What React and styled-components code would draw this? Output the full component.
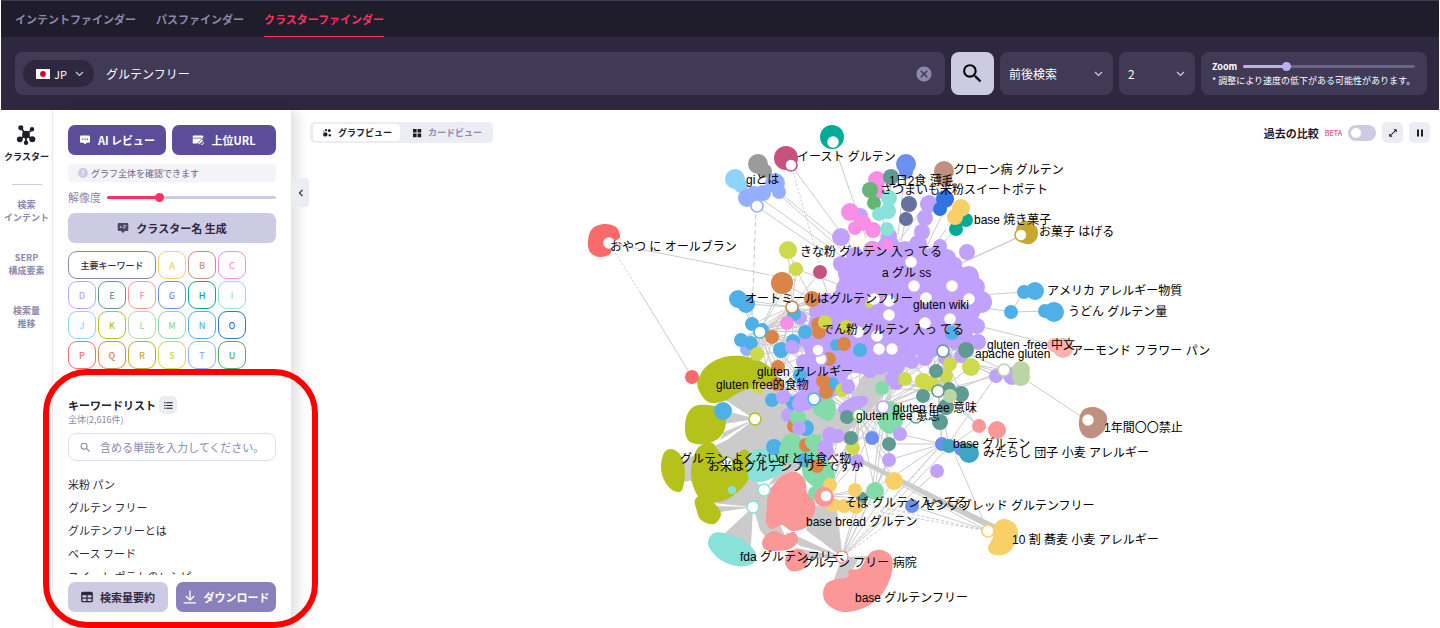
import React from 'react';
import styled, { createGlobalStyle } from 'styled-components';
import {
    MdCancel,
    MdChevronLeft,
    MdFormatListBulleted,
    MdOpenInFull,
    MdPause,
    MdSearch
} from 'react-icons/md';

const colors = {
    ink: '#1f1c2b',
    night: '#2d2840',
    field: '#403a57',
    muted: '#8e88ac',
    lilac: '#cdcae3',
    violet: '#5b4d9a',
    pink: '#fc3160',
    haze: '#ececf3',
    edge: '#cbcbcb'
};

const uiFont = '"Noto Sans CJK JP", "Noto Sans", sans-serif';

const GlobalStyle = createGlobalStyle`
    * {
        box-sizing: border-box;
    }

    body {
        margin: 0;
        background: white;
        color: ${colors.night};
        font-family: ${uiFont};
        font-size: 11px;
    }

    button, input, select {
        margin: 0;
        font-family: inherit;
        color: inherit;
    }

    button {
        padding: 0;
        border: 0;
        cursor: pointer;
    }

    a {
        color: inherit;
        text-decoration: none;
    }
`;

const Page = styled.div`
    display: flex;
    flex-direction: column;
    height: 100vh;
    padding: 0 1px;
    overflow: hidden;
`;

const TopNav = styled.nav`
    display: flex;
    flex: none;
    gap: 20px;
    height: 37px;
    padding: 0 14px;
    border-top: 1px solid ${colors.field};
    background: ${colors.ink};
`;

const NavLink = styled.a`
    display: flex;
    align-items: center;
    border-bottom: 1px solid ${props => (props.$active ? colors.pink : 'transparent')};
    color: ${props => (props.$active ? colors.pink : colors.muted)};
    font-weight: 700;
    line-height: 16px;
`;

const Toolbar = styled.div`
    display: flex;
    flex: none;
    gap: 6px;
    padding: 15px 12px 15px 14px;
    background: ${colors.night};
    color: white;
    font-size: 12px;
`;

const SearchBox = styled.div`
    display: flex;
    flex: 1;
    align-items: center;
    height: 43px;
    padding: 0 12px 0 8px;
    border-radius: 8px;
    background: ${colors.field};
`;

const CountryPill = styled.label`
    display: grid;
    grid-template-columns: 14px 1fr 9px;
    align-items: center;
    gap: 4px;
    width: 71px;
    height: 27px;
    padding: 0 10px 0 13px;
    border-radius: 14px;
    background: ${colors.night};
`;

const PlainSelect = styled.select`
    width: 100%;
    padding: 0;
    border: 0;
    appearance: none;
    background: transparent;
    font-size: ${props => props.$size || 12}px;
`;

const QueryInput = styled.input`
    flex: 1;
    min-width: 0;
    padding: 0 12px;
    border: 0;
    outline: 0;
    background: transparent;
    font-size: 12px;
`;

const ClearButton = styled.button`
    display: flex;
    background: transparent;
    color: ${colors.muted};
`;

const SubmitButton = styled.button`
    display: flex;
    align-items: center;
    justify-content: center;
    width: 43px;
    border-radius: 8px;
    background: ${colors.lilac};
    color: black;
`;

const SelectField = styled.label`
    display: grid;
    grid-template-columns: 1fr 9px;
    align-items: center;
    width: ${props => props.$width}px;
    padding: 0 10px 0 9px;
    border-radius: 8px;
    background: ${colors.field};
`;

const ZoomField = styled.div`
    display: flex;
    flex-direction: column;
    justify-content: center;
    width: 226px;
    padding: 0 12px 0 11px;
    border-radius: 8px;
    background: ${colors.field};
    font-size: 9px;
    line-height: 14px;
`;

const ZoomRow = styled.div`
    display: flex;
    align-items: center;
    gap: 6px;
    font-weight: 700;
`;

const ZoomNote = styled.span`
    white-space: nowrap;
`;

const Slider = styled.input`
    flex: 1;
    min-width: 0;
    height: 10px;
    appearance: none;
    background: transparent;

    &::-webkit-slider-runnable-track {
        height: 3px;
        border-radius: 2px;
        background: linear-gradient(
            to right,
            ${props => props.$fill} ${props => props.$level}%,
            ${props => props.$rest} ${props => props.$level}%
        );
    }

    &::-webkit-slider-thumb {
        width: 9px;
        height: 9px;
        margin-top: -3px;
        border-radius: 50%;
        appearance: none;
        background: ${props => props.$fill};
    }
`;

const Main = styled.main`
    display: flex;
    flex: 1;
    min-height: 0;
`;

const Rail = styled.nav`
    display: flex;
    flex: none;
    flex-direction: column;
    align-items: center;
    gap: 27px;
    width: 52px;
    padding-top: 15px;
    border-right: 1px solid ${colors.haze};
    color: ${colors.muted};
    font-size: 9px;
    font-weight: 700;
    line-height: 13px;
    text-align: center;
`;

const RailLink = styled.a`
    white-space: pre-line;
`;

const RailHome = styled.a`
    display: flex;
    flex-direction: column;
    align-items: center;
    gap: 5px;
    color: ${colors.ink};
`;

const RailDivider = styled.hr`
    width: 30px;
    margin: -6px 0 -14px;
    border: 0;
    border-top: 1px solid ${colors.lilac};
`;

const Panel = styled.aside`
    z-index: 1;
    display: flex;
    flex: none;
    flex-direction: column;
    width: 238px;
    padding: 15px 15px 16px;
    background: white;
    box-shadow: 6px 0 12px rgba(31, 28, 43, 0.14);
`;

const ButtonRow = styled.div`
    display: grid;
    grid-template-columns: ${props => props.$columns};
    gap: ${props => props.$gap}px;
`;

const buttonTones = {
    violet: { background: colors.violet, color: 'white' },
    lilac: { background: colors.lilac, color: colors.night },
    plum: { background: '#8a80bb', color: 'white' }
};

const ActionButton = styled.button`
    display: flex;
    flex: none;
    align-items: center;
    justify-content: center;
    gap: 7px;
    height: 30px;
    border-radius: 7px;
    background: ${props => buttonTones[props.$tone].background};
    color: ${props => buttonTones[props.$tone].color};
    font-size: 11px;
    font-weight: 700;
    white-space: nowrap;
`;

const Notice = styled.p`
    display: flex;
    align-items: center;
    gap: 3px;
    height: 18px;
    margin: 9px 0 7px;
    padding: 0 10px;
    border-radius: 4px;
    background: #f3f3f8;
    color: #6a6585;
    font-size: 9px;
`;

const ResolutionRow = styled.label`
    display: flex;
    align-items: center;
    gap: 6px;
    height: 16px;
    margin-bottom: 8px;
    color: ${colors.muted};
    line-height: 16px;
`;

const TagGrid = styled.div`
    display: grid;
    grid-template-columns: repeat(6, 28px);
    grid-auto-rows: 28px;
    gap: 2px;
    margin-top: 8px;
`;

const Tag = styled.button`
    grid-column: span ${props => props.$span || 1};
    border: 1px solid ${props => props.$color};
    border-radius: 9px;
    background: white;
    color: ${props => props.$text || props.$color};
    font-size: 9px;
    font-weight: 500;
`;

const KeywordSection = styled.section`
    position: relative;
    display: flex;
    flex: 1;
    flex-direction: column;
    min-height: 0;
    padding-top: 27px;
`;

const Callout = styled.div`
    position: absolute;
    top: 0;
    right: -42px;
    bottom: -16px;
    left: -25px;
    border: 6px solid #fe0000;
    border-radius: 44px;
    pointer-events: none;
`;

const KeywordHeading = styled.div`
    display: flex;
    align-items: center;
    gap: 3px;
    height: 18px;
`;

const KeywordTitle = styled.h2`
    margin: 0;
    color: ${colors.ink};
    font-size: 11px;
    font-weight: 700;
`;

const SquareButton = styled.button`
    display: flex;
    align-items: center;
    justify-content: center;
    width: ${props => props.$size}px;
    height: ${props => props.$size}px;
    border-radius: 5px;
    background: ${colors.haze};
    color: ${colors.ink};
`;

const KeywordTotal = styled.span`
    color: ${colors.muted};
    font-size: 9px;
    line-height: 12px;
`;

const KeywordSearch = styled.label`
    display: flex;
    flex: none;
    align-items: center;
    gap: 8px;
    height: 28px;
    margin: 7px 0 12px;
    padding: 0 0 0 10px;
    border: 1px solid #e0def0;
    border-radius: 8px;
    color: ${colors.muted};
`;

const KeywordInput = styled.input`
    flex: 1;
    min-width: 0;
    padding: 0;
    border: 0;
    outline: 0;
    font-size: 11px;

    &::placeholder {
        color: ${colors.muted};
    }
`;

const KeywordList = styled.ul`
    flex: 1;
    min-height: 0;
    margin: 0 0 7px;
    padding: 0;
    overflow: hidden;
    list-style: none;
    line-height: 23px;
`;

const Workspace = styled.section`
    position: relative;
    display: grid;
    grid-template: 1fr / 1fr;
    flex: 1;
    min-width: 0;
`;

const GraphCanvas = styled.svg`
    grid-area: 1 / 1;
    width: 100%;
    height: 100%;
    min-height: 0;
    font-family: "Liberation Sans", "Noto Sans CJK JP", sans-serif;
    font-size: 12px;
`;

const GraphBar = styled.div`
    z-index: 1;
    display: flex;
    grid-area: 1 / 1;
    align-items: center;
    align-self: start;
    justify-content: space-between;
    padding: 12px 9px 0 19px;
`;

const ViewTabs = styled.div`
    display: flex;
    height: 21px;
    padding: 2px 3px;
    border-radius: 5px;
    background: ${colors.haze};
`;

const ViewTab = styled.button`
    display: flex;
    align-items: center;
    gap: 6px;
    padding: 0 8px 0 ${props => (props.$active ? 9 : 12)}px;
    border-radius: 4px;
    background: ${props => (props.$active ? 'white' : 'transparent')};
    color: ${props => (props.$active ? colors.ink : colors.muted)};
    font-size: 9px;
    font-weight: 700;
`;

const GraphControls = styled.div`
    display: flex;
    align-items: center;
    gap: 6px;
`;

const CompareLabel = styled.label`
    display: flex;
    align-items: center;
    gap: 6px;
    color: ${colors.ink};
    font-weight: 700;
`;

const BetaMark = styled.span`
    color: #ee4a94;
    font-size: 7px;
    font-weight: 500;
`;

const Toggle = styled.input`
    width: 28px;
    height: 16px;
    padding: 3px;
    border-radius: 8px;
    appearance: none;
    background: ${colors.lilac};

    &::before {
        display: block;
        width: 10px;
        height: 10px;
        border-radius: 50%;
        background: white;
        content: '';
    }
`;

const CollapseButton = styled.button`
    position: absolute;
    z-index: 2;
    top: 68px;
    left: 1px;
    display: flex;
    align-items: center;
    justify-content: center;
    width: 17px;
    height: 29px;
    border-radius: 0 4px 4px 0;
    background: ${colors.haze};
`;

const Chevron = () => (
    <svg width="9" height="6" viewBox="0 0 9 6" fill="none" stroke="#cdcae3" aria-hidden="true">
        <path d="M1 1l3.5 3.5L8 1" strokeWidth="1.2" />
    </svg>
);

const Flag = () => (
    <svg width="14" height="10" viewBox="0 0 14 10" aria-hidden="true">
        <rect width="14" height="10" fill="white" />
        <circle cx="7" cy="5" r="2.9" fill="#d80027" />
    </svg>
);

const HubIcon = () => (
    <svg width="20" height="20" viewBox="0 0 20 20" fill="currentColor" aria-hidden="true">
        <path
            d="M10 10L4.8 2.6M10 10l6.2-5.8M10 10l-6.4 4.2M10 10l6.5 4.2M10 10v8"
            stroke="currentColor"
            strokeWidth="1.7"
        />
        <circle cx="10" cy="9.6" r="3.9" />
        <circle cx="4.8" cy="2.8" r="2.5" />
        <circle cx="16" cy="4.3" r="2.2" />
        <circle cx="3.8" cy="14.3" r="2.9" />
        <circle cx="16.3" cy="14.2" r="3" />
        <circle cx="10" cy="17.8" r="2.2" />
    </svg>
);

const ChatIcon = () => (
    <svg width="12" height="12" viewBox="0 0 12 12" aria-hidden="true">
        <path d="M2.2 1.5h7.6A1.2 1.2 0 0 1 11 2.7v4.8a1.2 1.2 0 0 1-1.2 1.2H7.5L6 10.6 4.5 8.7H2.2A1.2 1.2 0 0 1 1 7.5V2.7a1.2 1.2 0 0 1 1.2-1.2z" fill="white" />
        <path d="M3 4.5h1.3v1.3H3zM5.4 4.5h1.3v1.3H5.4zM7.7 4.5H9v1.3H7.7z" fill="#5b4d9a" />
    </svg>
);

const UrlIcon = () => (
    <svg width="12" height="12" viewBox="0 0 12 12" fill="white" aria-hidden="true">
        <path d="M1.6 1.5h8.8c.5 0 .9.4.9.9v1.3H.7V2.4c0-.5.4-.9.9-.9zM.7 4.6h10.6L5.4 9.6H1.6a.9.9 0 0 1-.9-.9z" />
        <path d="M6 10.5l.3-1.8 3.6-3.5 1.5 1.5-3.6 3.5z" stroke="#5b4d9a" strokeWidth=".7" />
        <path d="M9 10.3h1.5c.5 0 .7-.4.7-.9V8.2" fill="none" stroke="white" />
    </svg>
);

const NameIcon = () => (
    <svg width="12" height="12" viewBox="0 0 12 12" aria-hidden="true">
        <path d="M2 1h8a1.3 1.3 0 0 1 1.3 1.3v5.4A1.3 1.3 0 0 1 10 9H7.8L6 11.3 4.2 9H2A1.3 1.3 0 0 1 .7 7.7V2.3A1.3 1.3 0 0 1 2 1z" fill="#4a4561" />
        <path d="M2.4 5.8l1.4-2 1.3 2z" fill="#cdcae3" />
        <path d="M6 3.8h3.5M6 5.8h2.4" fill="none" stroke="#cdcae3" />
    </svg>
);

const InfoIcon = () => (
    <svg width="10" height="10" viewBox="0 0 10 10" aria-hidden="true">
        <circle cx="5" cy="5" r="5" fill="#cdcae3" />
        <path d="M5 2.2v3.5M5 6.8V8" stroke="white" strokeWidth="1" />
    </svg>
);

const TableIcon = () => (
    <svg width="12" height="12" viewBox="0 0 12 12" fill="none" stroke="currentColor" aria-hidden="true">
        <rect x=".8" y="1.3" width="10.4" height="9.4" rx="1" strokeWidth="1.3" />
        <path d="M1 3h10" strokeWidth="2.4" />
        <path d="M1 7.2h10M6 3v7.5" strokeWidth="1.2" />
    </svg>
);

const DownloadIcon = () => (
    <svg width="14" height="14" viewBox="0 0 14 14" fill="none" stroke="currentColor" aria-hidden="true">
        <path d="M7 .8v9M2.8 6L7 10.2 11.2 6M.8 12.8h12.4" strokeWidth="1.3" />
    </svg>
);

const NodesIcon = () => (
    <svg width="10" height="10" viewBox="0 0 10 10" fill="currentColor" aria-hidden="true">
        <circle cx="3.3" cy="6.4" r="2.2" />
        <circle cx="4" cy="2.2" r="1.1" />
        <circle cx="7.3" cy="2.6" r="1.5" />
        <circle cx="7.8" cy="7.3" r="1.2" />
        <circle cx="1.8" cy="3" r=".6" />
    </svg>
);

const CardsIcon = () => (
    <svg width="10" height="10" viewBox="0 0 10 10" fill="#1c1a22" aria-hidden="true">
        <path d="M1 1h3.6v3.6H1zM5.6 1h3.6v3.6H5.6zM1 5.6h3.6v3.6H1zM5.6 5.6h3.6v3.6H5.6z" />
    </svg>
);

const TAGS = [
    ['A', '#f9cf67'], ['B', '#bf8f7f'], ['C', '#f98ee6'], ['D', '#c0a2fd'], ['E', '#5f9a93'],
    ['F', '#fc9797'], ['G', '#6b90f0'], ['H', '#00ab95'], ['I', '#88e2da'], ['J', '#8cd4ff'],
    ['K', '#b5c21c'], ['L', '#bcd5a5'], ['M', '#83dca8'], ['N', '#4fb0e8'], ['O', '#2f74df'],
    ['P', '#f96b6b'], ['Q', '#d98548'], ['R', '#c8a72f'], ['S', '#ced94b'], ['T', '#94afff'],
    ['U', '#4fb063']
];

const KEYWORDS = ['米粉 パン', 'グルテン フリー', 'グルテンフリーとは', 'ベース フード', 'スイート ポテトのレシピ'];

const PURPLE = '#c0a2fd';
const OLIVE = '#b5c21c';
const SALMON = '#fc9797';
const AQUA = '#88e2da';
const GREEN = '#83dca8';
const BLUE = '#4fb0e8';
const LIME = '#ced94b';
const ORANGE = '#d98548';
const PINK = '#f98ee6';
const TEAL = '#5f9a93';
const YELLOW = '#f9cf67';
const ROYAL = '#6b90f0';
const PERI = '#94afff';
const BROWN = '#bf8f7f';
const LEAF = '#bcd5a5';
const JADE = '#00ab95';

// Grey wedges: bundles of edges between a hub and its cluster.
const FANS = [
    '755,419 722,398 745,380 775,376 790,392',
    '755,419 722,410 724,424',
    '755,419 724,432 720,440',
    '755,419 727,440 680,462 684,482 692,480 730,460',
    '755,419 782,392 812,402 815,440 800,470 770,468 740,470 730,448',
    '735,446 745,470 765,490 800,440 850,400 862,376 900,366 880,400 850,430 822,455 780,480 740,500 725,480 725,446',
    '790,395 812,405 830,422 870,384 895,366 862,412 836,440 800,452',
    '753,507 725,533 751,546',
    '753,507 715,506 720,512',
    '753,507 760,530 772,545 785,535 770,505 764,490 745,486 730,500',
    '753,507 700,470 690,480 712,503',
    '842,557 806,530 812,505 836,508',
    '842,557 833,582 848,578 858,560',
    '842,557 842,560 868,560 870,556',
    '842,557 797,548 790,560',
    '842,557 797,536 785,532 800,546',
    '858,462 862,459 1000,527 994,531'
];

const EDGES = [
    [609, 243, 765, 274], [765, 274, 800, 281, '4 3'], [609, 243, 640, 292, '2 2'], [640, 292, 692, 377],
    [833, 142, 866, 238], [791, 165, 850, 245], [791, 165, 822, 272, '2 2'], [756, 206, 752, 320, '5 3'],
    [756, 206, 850, 270], [763, 200, 850, 262], [774, 190, 856, 262], [779, 192, 850, 250],
    [787, 250, 797, 270], [796, 269, 812, 299], [796, 269, 860, 292], [820, 272, 830, 300],
    [782, 283, 812, 299], [1021, 236, 960, 264], [1021, 236, 930, 277], [1024, 292, 980, 295],
    [1024, 292, 1011, 312], [1011, 312, 985, 308], [1011, 312, 1052, 311], [1054, 345, 975, 325],
    [1088, 421, 1020, 376], [1004, 370, 950, 360], [1004, 370, 965, 352], [1004, 370, 955, 390],
    [996, 376, 948, 444], [996, 376, 926, 344], [1012, 376, 940, 355], [988, 531, 955, 455],
    [988, 531, 895, 482], [988, 531, 880, 512, '3 2'], [988, 531, 850, 500, '3 2'], [988, 531, 912, 506],
    [842, 557, 950, 446], [842, 557, 942, 444, '3 2'], [842, 557, 937, 471], [842, 557, 894, 480],
    [842, 557, 889, 460], [842, 557, 875, 491], [842, 557, 855, 507], [842, 557, 836, 503],
    [842, 557, 862, 497], [842, 557, 912, 506, '3 2'], [942, 444, 900, 434], [942, 444, 889, 444],
    [942, 444, 889, 460], [942, 444, 940, 421], [979, 426, 949, 396], [979, 426, 950, 446],
    [997, 430, 979, 426], [946, 229, 926, 260], [906, 163, 898, 235], [944, 178, 900, 240],
    [891, 185, 880, 240], [906, 219, 900, 245], [945, 209, 925, 250], [956, 229, 930, 257],
    [889, 460, 889, 444], [889, 460, 875, 491], [872, 438, 851, 438], [738, 299, 752, 324],
    [752, 324, 760, 331], [791, 323, 752, 330], [741, 340, 765, 328], [884, 418, 875, 491],
    [898, 430, 875, 491], [883, 407, 872, 491], [942, 444, 880, 512], [942, 444, 862, 497],
    [857, 461, 1000, 529], [889, 395, 898, 430]
];

// Each hub is joined by thin edges to every node within its reach.
const HUBS = [
    { x: 755, y: 419, reach: 90 },
    { x: 760, y: 331, reach: 75 },
    { x: 792, y: 307, reach: 62 },
    { x: 818, y: 350, reach: 70 },
    { x: 814, y: 399, reach: 70 },
    { x: 883, y: 407, reach: 64 },
    { x: 859, y: 415, reach: 80 },
    { x: 943, y: 351, reach: 64 },
    { x: 938, y: 391, reach: 60 },
    { x: 826, y: 496, reach: 66 }
];

const BLOBS = [
    [PURPLE, [[838, 284], [844, 264], [854, 252], [868, 252], [880, 240], [890, 230], [902, 244], [916, 240], [930, 250], [944, 246], [952, 260], [964, 268], [976, 280], [984, 300], [978, 318], [968, 332], [950, 340], [936, 344], [930, 360], [920, 354], [908, 362], [898, 380], [888, 372], [866, 374], [850, 374], [840, 392], [824, 402], [806, 410], [800, 394], [806, 362], [804, 346], [808, 326], [814, 310], [830, 300]]],
    [PURPLE, [[838, 408], [850, 398], [864, 396], [868, 402], [858, 410], [844, 416]]],
    [OLIVE, [[698, 388], [699, 377], [708, 365], [724, 357], [742, 356], [760, 361], [774, 371], [775, 382], [755, 387], [740, 392], [724, 401], [708, 402]]],
    [OLIVE, [[685, 430], [687, 415], [695, 406], [708, 405], [722, 409], [726, 422], [721, 436], [706, 444], [690, 442]]],
    [OLIVE, [[661, 468], [664, 453], [672, 449], [681, 456], [685, 472], [682, 490], [674, 491], [665, 482]]],
    [OLIVE, [[691, 476], [694, 456], [700, 446], [712, 443], [718, 450], [730, 462], [742, 450], [750, 454], [750, 474], [742, 488], [726, 500], [712, 502], [698, 496]]],
    [OLIVE, [[695, 500], [702, 495], [714, 503], [721, 514], [714, 524], [701, 520], [696, 508]]],
    [AQUA, [[748, 476], [750, 454], [762, 449], [780, 452], [784, 466], [776, 476], [760, 482]]],
    [AQUA, [[708, 544], [714, 533], [728, 534], [746, 542], [756, 554], [752, 564], [736, 566], [718, 558]]],
    [GREEN, [[778, 452], [784, 437], [796, 434], [808, 444], [820, 434], [822, 450], [832, 466], [834, 480], [818, 488], [804, 478], [800, 464], [782, 462]]],
    [GREEN, [[813, 410], [820, 397], [832, 398], [836, 410], [830, 421], [818, 416]]],
    [GREEN, [[878, 418], [882, 404], [894, 402], [903, 412], [901, 427], [890, 434], [880, 428]]],
    [SALMON, [[768, 493], [767, 508], [766, 522], [772, 529], [782, 525], [792, 531], [805, 528], [811, 519], [815, 511], [814, 500], [807, 492], [805, 480], [796, 472], [784, 475], [776, 482]]],
    [SALMON, [[762, 543], [767, 534], [776, 531], [784, 535], [794, 532], [798, 541], [790, 549], [776, 551], [766, 550]]],
    [SALMON, [[785, 562], [790, 551], [802, 550], [808, 560], [803, 569], [791, 571]]],
    [SALMON, [[823, 594], [827, 583], [838, 579], [848, 577], [849, 570], [860, 568], [870, 553], [882, 550], [892, 558], [891, 576], [882, 594], [866, 607], [844, 612], [828, 605]]],
    [YELLOW, [[988, 548], [993, 537], [995, 524], [1004, 519], [1015, 524], [1018, 536], [1011, 550], [1002, 555], [992, 554]]],
    [BROWN, [[1079, 426], [1082, 411], [1094, 407], [1106, 414], [1105, 429], [1094, 438], [1084, 436]]],
    ['#f96b6b', [[588, 241], [592, 229], [604, 224], [616, 227], [620, 237], [613, 243], [610, 254], [599, 257], [590, 252]]],
    ['#c8a72f', [[1016, 236], [1018, 224], [1028, 221], [1037, 228], [1037, 238], [1030, 244], [1020, 242]]]
];

const NODES = {
    [PURPLE]: [
        [929, 204, 9], [925, 218, 8], [922, 232, 8], [918, 244, 9], [841, 237, 9], [889, 236, 8], [841, 264, 8],
        [860, 216, 8], [967, 252, 8], [940, 246, 7], [955, 264, 7], [969, 276, 10], [981, 302, 11], [977, 326, 8],
        [845, 288, 9], [826, 301, 8], [817, 312, 8], [800, 318, 7], [793, 347, 7], [855, 256, 9], [968, 340, 7],
        [945, 358, 7], [955, 343, 7], [978, 342, 8], [961, 356, 7], [896, 382, 8], [893, 379, 8], [848, 386, 7],
        [784, 397, 7], [800, 400, 8], [788, 415, 7], [799, 427, 7], [830, 435, 8], [838, 436, 7], [900, 434, 7],
        [889, 460, 7], [937, 471, 7], [857, 461, 7], [826, 452, 8], [996, 376, 7], [1012, 376, 9], [850, 438, 7],
        [870, 370, 8], [912, 362, 7], [925, 358, 8], [872, 250, 9], [905, 250, 9], [933, 256, 9], [947, 258, 9],
        [975, 287, 10], [964, 332, 9], [947, 338, 9], [906, 358, 9], [880, 366, 9], [806, 340, 8], [804, 362, 8],
        [804, 385, 8], [836, 372, 9], [840, 300, 9], [847, 274, 9], [818, 394, 8], [933, 348, 9]
    ],
    '#9b9b9b': [[758, 164, 10], [765, 171, 7]],
    '#8cd4ff': [[735, 179, 10], [741, 186, 7]],
    [PERI]: [[747, 198, 9], [754, 194, 8], [763, 193, 8], [775, 183, 10], [779, 192, 7], [747, 349, 7]],
    '#c8527f': [[786, 158, 12], [820, 272, 7]],
    [JADE]: [[832, 137, 12], [966, 220, 7], [956, 229, 7]],
    [BLUE]: [
        [738, 299, 9], [746, 304, 9], [752, 324, 7], [762, 330, 7], [794, 314, 7], [741, 340, 7], [751, 343, 7],
        [781, 350, 8], [793, 341, 7], [805, 332, 7], [800, 375, 7], [772, 400, 7], [793, 403, 7], [806, 428, 8],
        [774, 447, 8], [723, 411, 9], [832, 384, 7], [860, 350, 7], [952, 333, 7], [1024, 292, 7], [1035, 291, 9],
        [1011, 312, 7], [1045, 311, 7], [1054, 312, 10], [804, 460, 7], [836, 345, 6]
    ],
    [PINK]: [
        [787, 323, 7], [877, 180, 9], [878, 192, 7], [850, 212, 9], [863, 223, 8], [855, 228, 7], [873, 230, 8],
        [873, 247, 6], [887, 245, 6]
    ],
    '#63b673': [[870, 190, 8], [874, 203, 7]],
    [ROYAL]: [[906, 164, 10], [906, 172, 7], [872, 438, 7], [942, 444, 7], [961, 449, 7], [912, 506, 7]],
    '#66719f': [[909, 204, 8], [906, 219, 7]],
    '#2f74df': [[945, 199, 9], [940, 209, 7]],
    [AQUA]: [[889, 198, 8], [888, 211, 8], [879, 214, 7], [887, 229, 7]],
    [ORANGE]: [
        [782, 283, 11], [812, 299, 8], [819, 325, 8], [819, 332, 7], [772, 337, 7], [844, 344, 7], [829, 359, 7],
        [778, 367, 7], [777, 384, 7], [823, 381, 7], [826, 392, 7], [794, 426, 7], [806, 445, 7], [817, 466, 7]
    ],
    [LIME]: [
        [788, 250, 9], [796, 269, 7], [825, 322, 7], [846, 327, 7], [757, 354, 7], [842, 390, 7], [853, 448, 7],
        [905, 379, 7], [923, 381, 8], [932, 384, 8], [946, 376, 7], [950, 364, 7], [971, 367, 9], [758, 388, 6]
    ],
    [TEAL]: [
        [891, 177, 8], [966, 350, 8], [936, 371, 7], [923, 396, 7], [961, 394, 8], [949, 389, 7], [946, 407, 8],
        [940, 422, 8], [847, 417, 7], [851, 438, 7], [889, 444, 7], [862, 498, 6]
    ],
    [GREEN]: [[882, 388, 7], [798, 418, 8], [788, 450, 9], [813, 442, 8], [815, 493, 7], [875, 491, 9]],
    [YELLOW]: [
        [961, 208, 9], [955, 217, 8], [894, 481, 9], [830, 485, 7], [855, 490, 7], [833, 505, 7], [844, 506, 7],
        [856, 507, 7]
    ],
    [BROWN]: [[944, 171, 10], [945, 180, 7]],
    [SALMON]: [[979, 426, 7], [997, 430, 9], [824, 497, 10]],
    '#ffb0b0': [[1054, 345, 7], [1063, 348, 10]],
    [LEAF]: [[950, 396, 7], [1021, 370, 9], [1021, 377, 9]],
    '#3fa5c5': [[949, 446, 7], [969, 453, 10]],
    '#f96b6b': [[692, 377, 7]]
};

// Nodes drawn over the clusters above.
const FRONT_NODES = [
    [799, 428, 7, PURPLE], [825, 448, 8, PURPLE], [792, 347, 7, PURPLE], [869, 304, 4, LIME],
    [783, 397, 7, PURPLE], [732, 490, 4, AQUA], [800, 404, 8, PURPLE], [848, 387, 7, PURPLE]
];

const RINGS = [
    [833, 142, 'white'], [791, 165, '#c8527f'], [757, 206, PERI], [609, 243, 'white'], [1021, 235, '#c8a72f'],
    [792, 307, ORANGE], [760, 332, BLUE], [755, 419, OLIVE], [814, 399, BLUE], [883, 407, PURPLE], [859, 415, GREEN],
    [943, 351, TEAL], [938, 391, TEAL], [916, 417, TEAL], [1004, 370, LEAF], [1088, 420, 'white'], [988, 531, YELLOW],
    [842, 557, SALMON], [764, 490, AQUA], [753, 507, AQUA], [826, 496, SALMON], [727, 463, OLIVE],
    [911, 262, 'white'], [914, 286, 'white'], [952, 286, 'white'], [889, 301, 'white'], [926, 298, 'white'],
    [969, 299, 'white'], [889, 315, 'white'], [925, 323, 'white'], [950, 319, 'white'], [877, 336, 'white'],
    [858, 332, 'white'], [879, 349, 'white'], [892, 349, 'white'], [874, 299, 'white'], [821, 359, PURPLE],
    [818, 350, PURPLE]
];

const LABELS = [
    [797, 161, 'イースト グルテン'], [746, 184, 'giとは'], [610, 251, 'おやつ に オールブラン'],
    [800, 256, 'きな粉 グルテン 入っ てる'], [745, 303, 'オートミールはグルテンフリー'],
    [822, 334, 'でん粉 グルテン 入っ てる'], [953, 174, 'クローン病 グルテン'], [889, 185, '1日2食 薄毛'],
    [880, 194, 'さつまいも米粉スイートポテト'], [974, 224, 'base 焼き菓子'], [1039, 236, 'お菓子 はげる'],
    [882, 277, 'a グル ss'], [913, 309, 'gluten wiki'], [1047, 295, 'アメリカ アレルギー物質'],
    [1068, 316, 'うどん グルテン量'], [987, 349, 'gluten -free 中文'], [975, 358, 'apache gluten'],
    [1071, 355, 'アーモンド フラワー パン'], [757, 376, 'gluten アレルギー'], [716, 389, 'gluten free的食物'],
    [893, 412, 'gluten free 意味'], [856, 420, 'gluten free 意思'], [1104, 432, '1年間〇〇禁止'],
    [953, 448, 'base グルテン'], [983, 457, 'みたらし 団子 小麦 アレルギー'], [680, 463, 'グルテン よくない'],
    [778, 463, 'gf とは食べ物'], [708, 471, 'お米はグルテンフリーですか'], [845, 507, 'そば グルテン入ってる'],
    [924, 510, 'ゼンブブレッド グルテンフリー'], [806, 526, 'base bread グルテン'],
    [1012, 544, '10 割 蕎麦 小麦 アレルギー'], [740, 561, 'fda グルテンフリー'],
    [802, 567, 'グルテン フリー 病院'], [855, 602, 'base グルテンフリー']
];

const nodesNear = ({ x, y, reach }) => (
    Object.values(NODES).flat().filter(node => Math.hypot(node[0] - x, node[1] - y) < reach)
);

// Closed Catmull-Rom curve through the given points.
const smoothPath = points => {
    const at = i => points[(i + points.length) % points.length];
    const curves = points.map((point, i) => {
        const [p0, p1, p2, p3] = [at(i - 1), point, at(i + 1), at(i + 2)];
        const c1 = [p1[0] + (p2[0] - p0[0]) / 6, p1[1] + (p2[1] - p0[1]) / 6];
        const c2 = [p2[0] - (p3[0] - p1[0]) / 6, p2[1] - (p3[1] - p1[1]) / 6];
        return `C${c1} ${c2} ${p2}`;
    });
    return `M${points[0]}${curves.join('')}Z`;
};

const ClusterGraph = () => (
    <GraphCanvas viewBox="291 110 1148 518" role="img" aria-label="クラスターグラフ">
        <g fill={colors.edge}>
            {FANS.map(points => <polygon key={points} points={points} />)}
        </g>
        <g stroke={colors.edge} strokeWidth="1">
            {EDGES.map(([x1, y1, x2, y2, dash], i) => (
                <line key={i} x1={x1} y1={y1} x2={x2} y2={y2} strokeDasharray={dash} />
            ))}
            {HUBS.map(hub => nodesNear(hub).map(([x, y]) => (
                <line key={`${hub.x}-${x}-${y}`} x1={hub.x} y1={hub.y} x2={x} y2={y} />
            )))}
        </g>
        {BLOBS.map(([color, points]) => (
            <path key={`${color}-${points[0]}`} d={smoothPath(points)} fill={color} />
        ))}
        {Object.entries(NODES).map(([color, nodes]) => (
            <g key={color} fill={color}>
                {nodes.map(([x, y, r]) => <circle key={`${x}-${y}`} cx={x} cy={y} r={r} />)}
            </g>
        ))}
        {FRONT_NODES.map(([x, y, r, color]) => (
            <circle key={`${x}-${y}`} cx={x} cy={y} r={r} fill={color} />
        ))}
        {RINGS.map(([x, y, color]) => (
            <circle
                key={`${x}-${y}`}
                cx={x}
                cy={y}
                r={color === 'white' ? 5 : 6}
                fill="white"
                stroke={color}
                strokeWidth="1.6"
            />
        ))}
        {LABELS.map(([x, y, text]) => <text key={text} x={x} y={y}>{text}</text>)}
    </GraphCanvas>
);

const Header = () => {
    const [zoom, setZoom] = React.useState(24);

    return (
        <header>
            <TopNav>
                <NavLink href="#intent">インテントファインダー</NavLink>
                <NavLink href="#path">パスファインダー</NavLink>
                <NavLink href="#cluster" $active>クラスターファインダー</NavLink>
            </TopNav>
            <Toolbar>
                <SearchBox>
                    <CountryPill>
                        <Flag />
                        <PlainSelect $size={11} aria-label="国">
                            <option>JP</option>
                        </PlainSelect>
                        <Chevron />
                    </CountryPill>
                    <QueryInput defaultValue="グルテンフリー" aria-label="キーワード" />
                    <ClearButton aria-label="クリア"><MdCancel size={18} /></ClearButton>
                </SearchBox>
                <SubmitButton aria-label="検索"><MdSearch size={25} /></SubmitButton>
                <SelectField $width={113}>
                    <PlainSelect aria-label="検索方法"><option>前後検索</option></PlainSelect>
                    <Chevron />
                </SelectField>
                <SelectField $width={76}>
                    <PlainSelect aria-label="深さ"><option>2</option></PlainSelect>
                    <Chevron />
                </SelectField>
                <ZoomField>
                    <ZoomRow>
                        <label htmlFor="zoom">Zoom</label>
                        <Slider
                            id="zoom"
                            type="range"
                            value={zoom}
                            onChange={e => setZoom(Number(e.target.value))}
                            $fill="#b9b0f2"
                            $rest="#6b6685"
                            $level={zoom}
                        />
                    </ZoomRow>
                    <ZoomNote>* 調整により速度の低下がある可能性があります。</ZoomNote>
                </ZoomField>
            </Toolbar>
        </header>
    );
};

const SidePanel = () => {
    const [resolution, setResolution] = React.useState(30);

    return (
        <Panel>
            <ButtonRow $columns="98fr 104fr" $gap={6}>
                <ActionButton $tone="violet"><ChatIcon />AI レビュー</ActionButton>
                <ActionButton $tone="violet"><UrlIcon />上位URL</ActionButton>
            </ButtonRow>
            <Notice><InfoIcon />グラフ全体を確認できます</Notice>
            <ResolutionRow>
                解像度
                <Slider
                    type="range"
                    value={resolution}
                    onChange={e => setResolution(Number(e.target.value))}
                    $fill={colors.pink}
                    $rest={colors.lilac}
                    $level={resolution}
                />
            </ResolutionRow>
            <ActionButton $tone="lilac"><NameIcon />クラスター名 生成</ActionButton>
            <TagGrid>
                <Tag $span={3} $color="#8e88a8" $text={colors.night}>主要キーワード</Tag>
                {TAGS.map(([letter, color]) => <Tag key={letter} $color={color}>{letter}</Tag>)}
            </TagGrid>
            <KeywordSection>
                <KeywordHeading>
                    <KeywordTitle>キーワードリスト</KeywordTitle>
                    <SquareButton $size={18} aria-label="一覧"><MdFormatListBulleted size={11} /></SquareButton>
                </KeywordHeading>
                <KeywordTotal>全体(2,616件)</KeywordTotal>
                <KeywordSearch>
                    <MdSearch size={13} />
                    <KeywordInput placeholder="含める単語を入力してください。" />
                </KeywordSearch>
                <KeywordList>
                    {KEYWORDS.map(keyword => <li key={keyword}>{keyword}</li>)}
                </KeywordList>
                <ButtonRow $columns="1fr 1fr" $gap={8}>
                    <ActionButton $tone="lilac"><TableIcon />検索量要約</ActionButton>
                    <ActionButton $tone="plum"><DownloadIcon />ダウンロード</ActionButton>
                </ButtonRow>
                <Callout />
            </KeywordSection>
        </Panel>
    );
};

export default function App() {
    return (
        <Page>
            <GlobalStyle />
            <Header />
            <Main>
                <Rail>
                    <RailHome href="#cluster"><HubIcon />クラスター</RailHome>
                    <RailDivider />
                    <RailLink href="#search-intent">{'検索\nインテント'}</RailLink>
                    <RailLink href="#serp">{'SERP\n構成要素'}</RailLink>
                    <RailLink href="#volume">{'検索量\n推移'}</RailLink>
                </Rail>
                <SidePanel />
                <Workspace>
                    <ClusterGraph />
                    <GraphBar>
                        <ViewTabs>
                            <ViewTab $active><NodesIcon />グラフビュー</ViewTab>
                            <ViewTab><CardsIcon />カードビュー</ViewTab>
                        </ViewTabs>
                        <GraphControls>
                            <CompareLabel>
                                過去の比較
                                <BetaMark>BETA</BetaMark>
                                <Toggle type="checkbox" />
                            </CompareLabel>
                            <SquareButton $size={21} aria-label="全画面"><MdOpenInFull size={10} /></SquareButton>
                            <SquareButton $size={21} aria-label="一時停止"><MdPause size={12} /></SquareButton>
                        </GraphControls>
                    </GraphBar>
                    <CollapseButton aria-label="閉じる"><MdChevronLeft size={14} /></CollapseButton>
                </Workspace>
            </Main>
        </Page>
    );
}
